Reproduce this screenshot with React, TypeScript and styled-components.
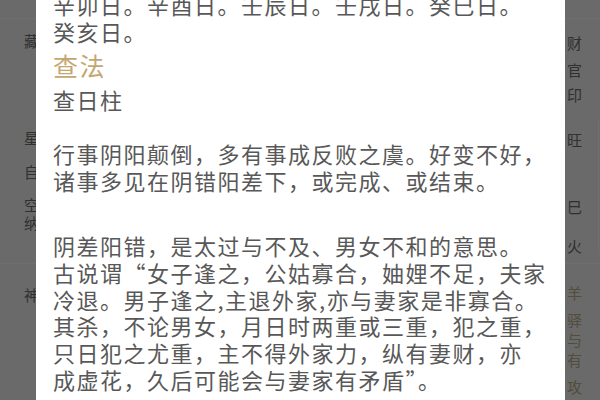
import React from "react";
import styled, { createGlobalStyle } from "styled-components";

const Global = createGlobalStyle`
  html, body { margin: 0; padding: 0; background: #fff; }
  body { font-family: "Noto Sans CJK SC", "Noto Sans", sans-serif; }
`;

const Page = styled.div`
  position: relative;
  width: 600px;
  height: 400px;
  overflow: hidden;
  background: #f4f4f4;
  display: flex;
  flex-direction: column;
  font-family: "Noto Sans CJK SC", sans-serif;
`;

const HeaderStrip = styled.div`
  height: 18px;
  flex-shrink: 0;
  border-bottom: 1px solid #ffffff;
`;

const Section = styled.div<{ $h?: number }>`
  display: flex;
  justify-content: space-between;
  ${(p) =>
    p.$h
      ? `height: ${p.$h}px; flex-shrink: 0; border-bottom: 1px solid #ffffff;`
      : "flex: 1;"}
`;

const LeftColumn = styled.div`
  display: flex;
  flex-direction: column;
  padding-left: 24px;
  width: 40px;
`;

const RightGroup = styled.div`
  display: flex;
`;

const RightColumn = styled.div`
  display: flex;
  flex-direction: column;
  width: 31px;
`;

const EdgeColumn = styled.div`
  width: 2px;
  display: flex;
  flex-direction: column;
`;

const EdgeBox = styled.div<{ $mt: number; $h: number }>`
  margin-top: ${(p) => p.$mt}px;
  height: ${(p) => p.$h}px;
  border-left: 1px solid #ffffff;
`;

const BgLabel = styled.span<{ $mt: number; $gold?: boolean }>`
  display: block;
  margin-top: ${(p) => p.$mt}px;
  font-size: 15px;
  line-height: 18px;
  color: ${(p) => (p.$gold ? "#bcb08a" : "#6e6e6e")};
`;

const Overlay = styled.div`
  position: absolute;
  inset: 0;
  background: rgba(0, 0, 0, 0.565);
`;

const Card = styled.div`
  position: absolute;
  left: 36px;
  top: -30px;
  width: 529px;
  bottom: -40px;
  background: #ffffff;
  box-sizing: border-box;
  padding: 21px 17px 0 17px;
  font-family: "Noto Sans CJK SC", sans-serif;
`;

const Paragraph = styled.div<{ $mt?: number }>`
  margin-top: ${(p) => p.$mt ?? 0}px;
  font-size: 22px;
  letter-spacing: 1.5px;
  line-height: 26.8px;
  color: #585858;
`;

const Line = styled.span`
  display: block;
  white-space: nowrap;
`;

const Heading = styled.div`
  margin-top: 5px;
  margin-bottom: 6px;
  font-size: 25px;
  letter-spacing: 1.5px;
  line-height: 30px;
  color: #c3a771;
`;

const leftLabels = [
  { t: "藏", mt: 13 },
  { t: "星", mt: 79 },
  { t: "自", mt: 16 },
  { t: "空", mt: 15 },
  { t: "纳", mt: 0 },
];

const rightLabels = [
  { t: "财", mt: 15 },
  { t: "官", mt: 9 },
  { t: "印", mt: 7 },
  { t: "旺", mt: 27 },
  { t: "巳", mt: 49 },
  { t: "火", mt: 21 },
];

const goldLabels = [
  { t: "羊", mt: 20 },
  { t: "驿", mt: 9 },
  { t: "与", mt: 2 },
  { t: "有", mt: 2 },
  { t: "攻", mt: 9 },
];

const paragraphs: { mt: number; lines: string[] }[] = [
  {
    mt: 28,
    lines: ["行事阴阳颠倒，多有事成反败之虞。好变不好，", "诸事多见在阴错阳差下，或完成、或结束。"],
  },
  {
    mt: 38,
    lines: [
      "阴差阳错，是太过与不及、男女不和的意思。",
      "古说谓“女子逢之，公姑寡合，妯娌不足，夫家",
      "冷退。男子逢之,主退外家,亦与妻家是非寡合。",
      "其杀，不论男女，月日时两重或三重，犯之重，",
      "只日犯之尤重，主不得外家力，纵有妻财，亦",
      "成虚花，久后可能会与妻家有矛盾”。",
    ],
  },
];

export default function App() {
  return (
    <>
      <Global />
      <Page>
        <HeaderStrip />
        <Section $h={244}>
          <LeftColumn>
            {leftLabels.map((l, i) => (
              <BgLabel key={i} $mt={l.mt}>
                {l.t}
              </BgLabel>
            ))}
          </LeftColumn>
          <RightGroup>
            <RightColumn>
              {rightLabels.map((l, i) => (
                <BgLabel key={i} $mt={l.mt}>
                  {l.t}
                </BgLabel>
              ))}
            </RightColumn>
            <EdgeColumn>
              <EdgeBox $mt={101} $h={134} />
            </EdgeColumn>
          </RightGroup>
        </Section>
        <Section>
          <LeftColumn>
            <BgLabel $mt={22}>神</BgLabel>
          </LeftColumn>
          <RightGroup>
            <RightColumn>
              {goldLabels.map((l, i) => (
                <BgLabel key={i} $mt={l.mt} $gold>
                  {l.t}
                </BgLabel>
              ))}
            </RightColumn>
            <EdgeColumn />
          </RightGroup>
        </Section>
        <Overlay />
        <Card>
          <Paragraph>
            <Line>辛卯日。辛酉日。壬辰日。壬戌日。癸巳日。</Line>
            <Line>癸亥日。</Line>
          </Paragraph>
          <Heading>查法</Heading>
          <Paragraph>
            <Line>查日柱</Line>
          </Paragraph>
          {paragraphs.map((p, i) => (
            <Paragraph key={i} $mt={p.mt}>
              {p.lines.map((l, j) => (
                <Line key={j}>{l}</Line>
              ))}
            </Paragraph>
          ))}
        </Card>
      </Page>
    </>
  );
}
